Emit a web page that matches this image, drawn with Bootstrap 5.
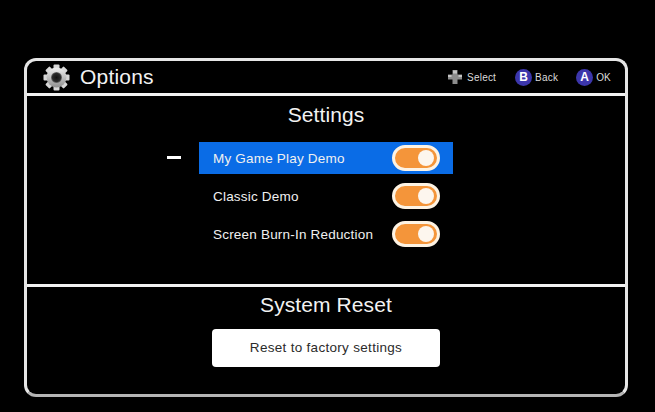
<!DOCTYPE html>
<html lang="en">
<head>
  <meta charset="UTF-8">
  <meta name="viewport" content="width=device-width, initial-scale=1.0">
  <title>Options</title>
  <link href="https://cdn.jsdelivr.net/npm/bootstrap@5.3.0/dist/css/bootstrap.min.css" rel="stylesheet">
  <style>
    body {
      background: #000;
      color: #f2f2f2;
      font-family: "Liberation Sans", Arial, sans-serif;
      overflow: hidden;
    }
    .screen-wrap {
      padding: 58px 27px 15px 24px;
      height: 412px;
    }
    .frame-box {
      height: 339px;
      border: 3px solid #e6e6e6;
      border-bottom-color: #b5b5b5;
      border-radius: 12px;
    }
    .top-bar {
      height: 35px;
      border-bottom: 3px solid #f2f2f2;
      padding: 0 14px 0 16px;
    }
    .top-title {
      font-size: 21px;
      letter-spacing: .2px;
      margin-left: 10px;
    }
    .hint-text {
      font-size: 10px;
      letter-spacing: .2px;
      color: #dcdcdc;
    }
    .hint-btn {
      width: 17px;
      height: 17px;
      border-radius: 50%;
      background: #3c36ab;
      color: #fff;
      font-size: 12px;
      font-weight: 700;
      line-height: 17px;
      text-align: center;
    }
    .hint-btn + span {
      margin-left: 3px;
    }
    .hint-gap-b {
      margin-left: 19px;
    }
    .hint-gap-a {
      margin-left: 18px;
    }
    .settings-pane {
      height: 191px;
      padding-top: 7px;
      border-bottom: 3px solid #f2f2f2;
    }
    .pane-title {
      font-size: 21px;
      line-height: 24px;
      margin: 0;
      font-weight: 400;
      letter-spacing: .1px;
      color: #f2f2f2;
    }
    .option-list {
      width: 254px;
      margin-top: 15px;
      gap: 6px;
    }
    .option-row {
      height: 32px;
      padding: 0 13px 0 14px;
      font-size: 13.5px;
      letter-spacing: .2px;
      color: #f0f0f0;
    }
    .option-label {
      padding-top: 2px;
    }
    .option-row.is-on {
      background: #0a6ce6;
    }
    .minus-mark {
      position: absolute;
      left: -32px;
      top: 14px;
      width: 14px;
      height: 3px;
      background: #fff;
    }
    .pill-toggle {
      width: 48px;
      height: 26px;
      border: 3px solid #fdf3e4;
      border-radius: 13px;
      background: #f4953a;
      padding: 2px 3px;
    }
    .pill-toggle i {
      display: block;
      width: 16px;
      height: 16px;
      border-radius: 50%;
      background: #fdf6ee;
    }
    .reset-pane .pane-title {
      margin-top: 6px;
    }
    .reset-btn {
      width: 228px;
      height: 38px;
      margin-top: 12px;
      background: #fff;
      color: #2b2b2b;
      font-size: 13.5px;
      letter-spacing: .3px;
      border: 0;
      border-radius: 4px;
      padding: 0;
    }
  </style>
</head>
<body>
  <div class="screen-wrap">
    <div class="frame-box d-flex flex-column">
      <div class="top-bar d-flex align-items-center">
        <svg width="27" height="27" viewBox="-13.5 -13.5 27 27">
          <defs>
            <linearGradient id="gearFill" x1="0" y1="0" x2="0" y2="1">
              <stop offset="0" stop-color="#f0f0f0"/>
              <stop offset="1" stop-color="#8f8f8f"/>
            </linearGradient>
            <radialGradient id="gearHub">
              <stop offset="0" stop-color="#111"/>
              <stop offset=".75" stop-color="#2a2a2a"/>
              <stop offset="1" stop-color="#777"/>
            </radialGradient>
          </defs>
          <g fill="#d8d8d8">
            <rect x="-3" y="-13" width="6" height="26" rx="1"/>
            <rect x="-3" y="-13" width="6" height="26" rx="1" transform="rotate(45)"/>
            <rect x="-3" y="-13" width="6" height="26" rx="1" transform="rotate(90)"/>
            <rect x="-3" y="-13" width="6" height="26" rx="1" transform="rotate(135)"/>
          </g>
          <circle r="10" fill="url(#gearFill)"/>
          <circle r="5.500" fill="url(#gearHub)"/>
        </svg>
        <span class="top-title">Options</span>
        <div class="ms-auto d-flex align-items-center hint-text">
          <svg width="16" height="16" viewBox="0 0 16 16">
            <path d="M5.500 1h5v4.500H15v5h-4.500V15h-5v-4.500H1v-5h4.500z" fill="#8c8c8c"/>
            <path d="M6 1.500h4v3H6zM11.500 6H15v2h-3.500zM1 6h3.500v2H1z" fill="#c4c4c4"/>
          </svg>
          <span class="ms-1">Select</span>
          <span class="hint-btn hint-gap-b">B</span>
          <span>Back</span>
          <span class="hint-btn hint-gap-a">A</span>
          <span>OK</span>
        </div>
      </div>

      <div class="settings-pane d-flex flex-column align-items-center">
        <h2 class="pane-title">Settings</h2>
        <div class="option-list d-flex flex-column">
          <div class="option-row is-on d-flex align-items-center justify-content-between position-relative">
            <span class="minus-mark"></span>
            <span class="option-label">My Game Play Demo</span>
            <span class="pill-toggle d-flex justify-content-end"><i></i></span>
          </div>
          <div class="option-row d-flex align-items-center justify-content-between">
            <span class="option-label">Classic Demo</span>
            <span class="pill-toggle d-flex justify-content-end"><i></i></span>
          </div>
          <div class="option-row d-flex align-items-center justify-content-between">
            <span class="option-label">Screen Burn-In Reduction</span>
            <span class="pill-toggle d-flex justify-content-end"><i></i></span>
          </div>
        </div>
      </div>

      <div class="reset-pane d-flex flex-column align-items-center">
        <h2 class="pane-title">System Reset</h2>
        <button type="button" class="btn reset-btn">Reset to factory settings</button>
      </div>
    </div>
  </div>
  <script src="https://cdn.jsdelivr.net/npm/bootstrap@5.3.0/dist/js/bootstrap.bundle.min.js"></script>
</body>
</html>
